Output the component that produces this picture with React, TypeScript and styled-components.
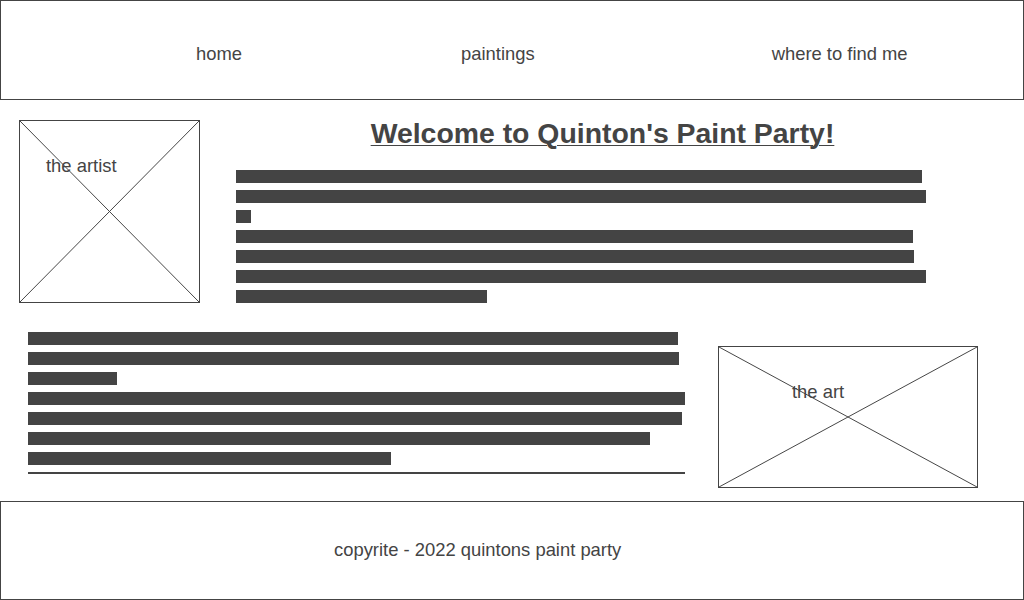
import React from "react";
import styled, { createGlobalStyle } from "styled-components";

const Global = createGlobalStyle`
  html, body { margin: 0; padding: 0; background: #fff; }
  body { font-family: "Liberation Sans", Arial, sans-serif; color: #444; overflow: hidden; }
  * { box-sizing: border-box; }
`;

const Page = styled.div`
  width: 1024px;
  height: 600px;
  display: flex;
  flex-direction: column;
`;

const Header = styled.nav`
  height: 100px;
  border: 1px solid #444;
  display: flex;
  align-items: flex-start;
  padding-top: 43px;
`;

const NavLink = styled.a<{ $offset: number }>`
  margin-left: ${(p) => p.$offset}px;
  font-size: 18.4px;
  line-height: 20px;
  color: #444;
  text-decoration: none;
`;

const Row = styled.section<{ $top: number }>`
  display: flex;
  align-items: flex-start;
  margin-top: ${(p) => p.$top}px;
`;

const Placeholder = styled.div<{ $w: number; $h: number; $left: number; $top: number; $padX: number; $padY: number }>`
  position: relative;
  flex: none;
  width: ${(p) => p.$w}px;
  height: ${(p) => p.$h}px;
  margin-left: ${(p) => p.$left}px;
  margin-top: ${(p) => p.$top}px;
  border: 1px solid #444;
  padding: ${(p) => p.$padY}px 0 0 ${(p) => p.$padX}px;
`;

const Cross = styled.svg`
  position: absolute;
  inset: 0;
  width: 100%;
  height: 100%;
`;

const Label = styled.span`
  position: relative;
  font-size: 18.4px;
  line-height: 20px;
  color: #444;
`;

const Intro = styled.div`
  width: 733px;
  margin-left: 36px;
  display: flex;
  flex-direction: column;
`;

const Title = styled.h1`
  margin: -2px 0 22px;
  font-size: 28.4px;
  line-height: 30px;
  font-weight: bold;
  text-align: center;
  text-decoration: underline;
  text-decoration-thickness: 1px;
  text-underline-offset: 2px;
  color: #444;
`;

const Lines = styled.div<{ $left: number; $width?: number }>`
  display: flex;
  flex-direction: column;
  gap: 7px;
  margin-left: ${(p) => p.$left}px;
  ${(p) => (p.$width ? `width: ${p.$width}px;` : "")}
`;

const Bar = styled.div<{ $w: number }>`
  height: 13px;
  width: ${(p) => p.$w}px;
  background: #444;
`;

const Rule = styled.hr`
  margin: 0;
  border: none;
  height: 2px;
  background: #444;
  width: 100%;
`;

const Footer = styled.footer`
  margin-top: 13px;
  height: 99px;
  border: 1px solid #444;
  display: flex;
  align-items: center;
  padding: 0 0 2px 333px;
  font-size: 18.4px;
  color: #444;
`;

const XBox: React.FC<{ w: number; h: number; left: number; top: number; padX: number; padY: number; label: string }> = ({ w, h, left, top, padX, padY, label }) => (
  <Placeholder $w={w} $h={h} $left={left} $top={top} $padX={padX} $padY={padY}>
    <Cross viewBox={`0 0 ${w} ${h}`} preserveAspectRatio="none">
      <line x1="0" y1="0" x2={w} y2={h} stroke="#444" strokeWidth="1" />
      <line x1={w} y1="0" x2="0" y2={h} stroke="#444" strokeWidth="1" />
    </Cross>
    <Label>{label}</Label>
  </Placeholder>
);

const introBars = [686, 690, 15, 677, 678, 690, 251];
const bodyBars = [650, 651, 89, 657, 654, 622, 363];

export default function App() {
  return (
    <>
      <Global />
      <Page>
        <Header>
          <NavLink $offset={195}>home</NavLink>
          <NavLink $offset={219}>paintings</NavLink>
          <NavLink $offset={237}>where to find me</NavLink>
        </Header>
        <Row $top={20}>
          <XBox w={181} h={183} left={19} top={0} padX={26} padY={35} label="the artist" />
          <Intro>
            <Title>Welcome to Quinton's Paint Party!</Title>
            <Lines $left={0}>
              {introBars.map((w, i) => (
                <Bar key={i} $w={w} />
              ))}
            </Lines>
          </Intro>
        </Row>
        <Row $top={29}>
          <Lines $left={28} $width={657}>
            {bodyBars.map((w, i) => (
              <Bar key={i} $w={w} />
            ))}
            <Rule />
          </Lines>
          <XBox w={260} h={142} left={33} top={14} padX={73} padY={35} label="the art" />
        </Row>
        <Footer>copyrite - 2022 quintons paint party</Footer>
      </Page>
    </>
  );
}
